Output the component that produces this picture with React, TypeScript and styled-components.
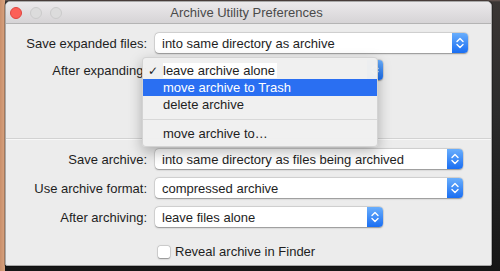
import React from 'react';
import styled, { createGlobalStyle } from 'styled-components';

const GlobalStyle = createGlobalStyle`
  html, body {
    margin: 0;
    padding: 0;
  }
  body {
    font-family: "Liberation Sans", Arial, sans-serif;
    background: #222;
  }
`;

const Desktop = styled.div`
  width: 500px;
  height: 271px;
  box-sizing: border-box;
  padding: 1px 8px 5px 5px;
  background:
    linear-gradient(to right, #c98f6b 0, #d9a37f 5px, transparent 5px),
    linear-gradient(to bottom, #6b5a55 0, #3a3634 2px, #2b2b2b 40%, #161616 100%);
  display: flex;
`;

const Window = styled.div`
  flex: 1;
  display: flex;
  flex-direction: column;
  background: #ececec;
  border: 1px solid #a9a9a9;
  border-radius: 5px 5px 2px 2px;
  overflow: hidden;
  box-shadow: 0 0 0 1px rgba(0, 0, 0, 0.25);
`;

const TitleBar = styled.div`
  height: 21px;
  flex: none;
  display: flex;
  align-items: center;
  background: linear-gradient(to bottom, #ebe9eb, #d6d4d6);
  border-bottom: 1px solid #b4b4b4;
`;

const Lights = styled.div`
  display: flex;
  gap: 8px;
  padding-left: 4px;
`;

const Light = styled.span<{ $color: string; $edge: string }>`
  width: 12px;
  height: 12px;
  border-radius: 50%;
  box-sizing: border-box;
  background: ${(p) => p.$color};
  border: 1px solid ${(p) => p.$edge};
`;

const Title = styled.div`
  flex: 1;
  text-align: center;
  margin-left: -60px;
  font-size: 13px;
  color: #4a4a4a;
`;

const Section = styled.div<{ $height?: number }>`
  display: grid;
  grid-template-columns: 141px 1fr;
  column-gap: 8px;
  row-gap: ${(p) => (p.$height ? 7 : 9)}px;
  align-content: start;
  padding-top: 9px;
  ${(p) => (p.$height ? `height: ${p.$height}px;` : '')}
  box-sizing: border-box;
`;

const Separator = styled.div`
  height: 1px;
  background: #d2d2d2;
  border-bottom: 1px solid #f8f8f8;
`;

const Label = styled.div`
  font-size: 13px;
  color: #1e1e1e;
  text-align: right;
  white-space: nowrap;
  align-self: center;
`;

const PopupWrap = styled.div`
  position: relative;
`;

const Popup = styled.div<{ $width: number }>`
  width: ${(p) => p.$width}px;
  height: 20px;
  display: flex;
  align-items: center;
  background: #fff;
  border-radius: 4px;
  box-shadow: 0 0.5px 1.5px rgba(0, 0, 0, 0.35), 0 0 0 0.5px rgba(0, 0, 0, 0.12);
  font-size: 13px;
  color: #1e1e1e;
`;

const PopupText = styled.span`
  flex: 1;
  padding-left: 7px;
  white-space: nowrap;
`;

const Stepper = styled.span`
  width: 16px;
  height: 20px;
  border-radius: 0 4px 4px 0;
  background: linear-gradient(to bottom, #69aefc, #1a6ef2);
  display: flex;
  align-items: center;
  justify-content: center;
`;

const Menu = styled.div`
  position: absolute;
  left: -13px;
  top: -3px;
  width: 236px;
  padding: 4px 0;
  background: rgba(240, 240, 240, 0.98);
  border: 1px solid rgba(0, 0, 0, 0.12);
  border-radius: 4px;
  box-shadow: 0 5px 14px rgba(0, 0, 0, 0.28);
  z-index: 2;
  box-sizing: border-box;
`;

const MenuItem = styled.div<{ $active?: boolean }>`
  height: 17px;
  display: flex;
  align-items: center;
  font-size: 13px;
  color: ${(p) => (p.$active ? '#fff' : '#1e1e1e')};
  background: ${(p) => (p.$active ? '#2a6ff2' : 'transparent')};
  white-space: nowrap;
`;

const Check = styled.span`
  width: 20px;
  padding-left: 5px;
  box-sizing: border-box;
  font-family: "DejaVu Sans", sans-serif;
  font-size: 12px;
`;

const ItemText = styled.span<{ $boxed?: boolean }>`
  ${(p) => (p.$boxed ? 'background: #fff; padding-right: 2px;' : '')}
`;

const MenuRule = styled.div`
  height: 1px;
  margin: 6px 0 5px;
  background: #d8d8d8;
`;

const CheckRow = styled.label`
  grid-column: 2;
  display: flex;
  align-items: center;
  gap: 5px;
  margin: 8px 0 0 3px;
  font-size: 13px;
  color: #1e1e1e;
`;

const Box = styled.span`
  width: 12px;
  height: 12px;
  background: #fff;
  border-radius: 2px;
  box-shadow: 0 0.5px 1.5px rgba(0, 0, 0, 0.35), 0 0 0 0.5px rgba(0, 0, 0, 0.15);
`;

const Arrows = () => (
  <svg width="8" height="12" viewBox="0 0 8 12">
    <path d="M1 4.5 L4 1.5 L7 4.5 M1 7.5 L4 10.5 L7 7.5" fill="none" stroke="#fff" strokeWidth="1.4" strokeLinecap="round" strokeLinejoin="round" />
  </svg>
);

type SelectProps = { value: string; width: number; children?: React.ReactNode };

const Select = ({ value, width, children }: SelectProps) => (
  <PopupWrap>
    <Popup $width={width}>
      <PopupText>{value}</PopupText>
      <Stepper>
        <Arrows />
      </Stepper>
    </Popup>
    {children}
  </PopupWrap>
);

export default function App() {
  return (
    <>
      <GlobalStyle />
      <Desktop>
        <Window>
          <TitleBar>
            <Lights>
              <Light $color="#fc5f57" $edge="#df443f" />
              <Light $color="#dcdcdc" $edge="#cbcbcb" />
              <Light $color="#dcdcdc" $edge="#cbcbcb" />
            </Lights>
            <Title>Archive Utility Preferences</Title>
          </TitleBar>

          <Section $height={114}>
            <Label>Save expanded files:</Label>
            <Select value="into same directory as archive" width={313} />
            <Label>After expanding:</Label>
            <Select value="leave archive alone" width={228}>
              <Menu>
                <MenuItem>
                  <Check>✓</Check>
                  <ItemText $boxed>leave archive alone</ItemText>
                </MenuItem>
                <MenuItem $active>
                  <Check />
                  <ItemText>move archive to Trash</ItemText>
                </MenuItem>
                <MenuItem>
                  <Check />
                  <ItemText>delete archive</ItemText>
                </MenuItem>
                <MenuRule />
                <MenuItem>
                  <Check />
                  <ItemText>move archive to…</ItemText>
                </MenuItem>
              </Menu>
            </Select>
          </Section>

          <Separator />

          <Section>
            <Label>Save archive:</Label>
            <Select value="into same directory as files being archived" width={308} />
            <Label>Use archive format:</Label>
            <Select value="compressed archive" width={308} />
            <Label>After archiving:</Label>
            <Select value="leave files alone" width={228} />
            <CheckRow>
              <Box />
              Reveal archive in Finder
            </CheckRow>
          </Section>
        </Window>
      </Desktop>
    </>
  );
}
